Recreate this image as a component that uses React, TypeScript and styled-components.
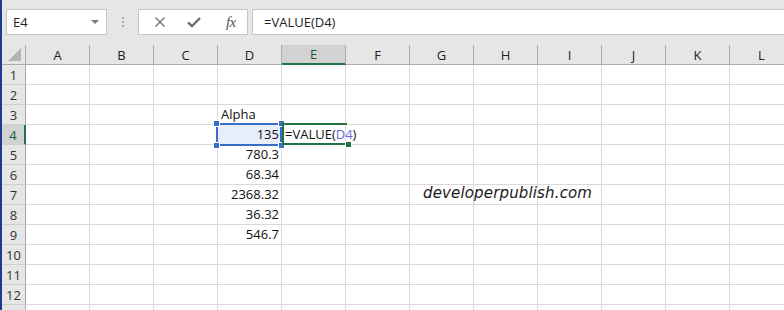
import React from 'react';
import styled, { createGlobalStyle, css } from 'styled-components';

const GlobalStyle = createGlobalStyle`
    html, body {
        margin: 0;
        padding: 0;
        background: #ffffff;
    }
    body {
        font-family: "Open Sans", "Liberation Sans", sans-serif;
    }
`;

const COLUMNS = ['A', 'B', 'C', 'D', 'E', 'F', 'G', 'H', 'I', 'J', 'K', 'L'];
const ROW_COUNT = 12;

const GREEN = '#217346';
const REF_BLUE = '#3a6cc9';

type CellValue = { text: string; align?: 'left' | 'right'; formula?: boolean };

const DATA: Record<string, CellValue> = {
    D3: { text: 'Alpha', align: 'left' },
    D4: { text: '135', align: 'right' },
    D5: { text: '780.3', align: 'right' },
    D6: { text: '68.34', align: 'right' },
    D7: { text: '2368.32', align: 'right' },
    D8: { text: '36.32', align: 'right' },
    D9: { text: '546.7', align: 'right' },
    E4: { text: '=VALUE(D4)', align: 'left', formula: true },
};

const Frame = styled.div`
    position: relative;
    width: 784px;
    height: 310px;
    overflow: hidden;
    box-sizing: border-box;
    border-left: 2px solid #1f3a93;
    background: #e6e6e6;
    display: flex;
    flex-direction: column;
`;

const TopBar = styled.div`
    height: 45px;
    flex: none;
    display: flex;
    align-items: flex-start;
    padding: 9px 0 0 4px;
    box-sizing: border-box;
`;

const NameBox = styled.div`
    width: 101px;
    height: 26px;
    box-sizing: border-box;
    background: #ffffff;
    border: 1px solid #c6c6c6;
    display: flex;
    align-items: center;
    justify-content: space-between;
    padding: 0 6px 0 6px;
    font-size: 13px;
    color: #222;
`;

const DropArrow = styled.span`
    width: 0;
    height: 0;
    border-left: 4px solid transparent;
    border-right: 4px solid transparent;
    border-top: 4px solid #7a7a7a;
    margin-right: 1px;
`;

const Grip = styled.div`
    width: 31px;
    height: 26px;
    display: flex;
    flex-direction: column;
    align-items: center;
    justify-content: center;
    gap: 2px;

    span {
        width: 2px;
        height: 2px;
        background: #a8a8a8;
    }
`;

const ButtonGroup = styled.div`
    width: 110px;
    height: 26px;
    box-sizing: border-box;
    background: #ffffff;
    border: 1px solid #c6c6c6;
    display: flex;
    align-items: center;
    justify-content: space-around;
    padding: 0 1px 0 4px;
`;

const BarButton = styled.span`
    width: 24px;
    display: flex;
    align-items: center;
    justify-content: center;
    color: #6e6e6e;
`;

const FxLabel = styled.span`
    font-family: "Liberation Serif", serif;
    font-style: italic;
    font-size: 15px;
    color: #555;
    letter-spacing: -0.5px;
    margin-left: 4px;
`;

const FormulaInput = styled.div`
    flex: 1;
    height: 26px;
    margin-left: 4px;
    box-sizing: border-box;
    background: #ffffff;
    border: 1px solid #c6c6c6;
    border-right: none;
    display: flex;
    align-items: center;
    padding-left: 11px;
    font-size: 13px;
    color: #222;
`;

const Sheet = styled.div`
    display: grid;
    grid-template-columns: 24px repeat(${COLUMNS.length}, 64px);
    grid-template-rows: 20px repeat(${ROW_COUNT + 1}, 20px);
    background: #ffffff;
`;

const Corner = styled.div`
    background: #e6e6e6;
    border-right: 1px solid #ababab;
    border-bottom: 1px solid #ababab;
    box-sizing: border-box;
    display: flex;
    align-items: flex-end;
    justify-content: flex-end;
    padding: 0 4px 3px 0;
`;

const CornerTriangle = styled.span`
    width: 0;
    height: 0;
    border-left: 13px solid transparent;
    border-bottom: 13px solid #b5b5b5;
`;

const ColHeader = styled.div<{ $active?: boolean }>`
    background: #e6e6e6;
    box-sizing: border-box;
    border-right: 1px solid #ababab;
    border-bottom: 1px solid #ababab;
    display: flex;
    align-items: center;
    justify-content: center;
    font-size: 13px;
    color: #222;
    ${(p) =>
        p.$active &&
        css`
            background: #d2d2d2;
            border-bottom: 2px solid ${GREEN};
            color: #1d5a38;
        `}
`;

const RowHeader = styled.div<{ $active?: boolean }>`
    background: #e6e6e6;
    box-sizing: border-box;
    border-right: 1px solid #ababab;
    border-bottom: 1px solid #d0d0d0;
    display: flex;
    align-items: center;
    justify-content: center;
    font-size: 13px;
    color: #333;
    ${(p) =>
        p.$active &&
        css`
            background: #d2d2d2;
            border-right: 2px solid ${GREEN};
            color: #1d5a38;
        `}
`;

const Cell = styled.div<{ $align?: 'left' | 'right'; $ref?: boolean }>`
    position: relative;
    box-sizing: border-box;
    border-right: 1px solid #d9d9d9;
    border-bottom: 1px solid #d9d9d9;
    display: flex;
    align-items: flex-end;
    justify-content: ${(p) => (p.$align === 'right' ? 'flex-end' : 'flex-start')};
    padding: 0 2px 1px 3px;
    font-size: 13px;
    color: #111;
    white-space: nowrap;
    overflow: visible;
    background: ${(p) => (p.$ref ? '#e8eef9' : 'transparent')};
`;

const CellText = styled.span`
    position: relative;
    z-index: 2;
`;

const RefName = styled.span`
    color: #6a67d4;
`;

const RefBox = styled.div`
    position: absolute;
    top: -2px;
    left: -2px;
    right: -1px;
    bottom: -2px;
    border: 2px solid ${REF_BLUE};
    pointer-events: none;
    z-index: 3;
`;

const Handle = styled.span<{ $x: 'left' | 'right'; $y: 'top' | 'bottom'; $color: string }>`
    position: absolute;
    width: 5px;
    height: 5px;
    background: ${(p) => p.$color};
    border: 1px solid #ffffff;
    ${(p) => (p.$x === 'left' ? 'left: -5px;' : 'right: -5px;')}
    ${(p) => (p.$y === 'top' ? 'top: -5px;' : 'bottom: -5px;')}
`;

const EditBox = styled.div`
    position: absolute;
    top: -2px;
    left: 0;
    right: -2px;
    bottom: -1px;
    border-top: 2px solid ${GREEN};
    border-bottom: 2px solid ${GREEN};
    border-left: 2px solid ${GREEN};
    pointer-events: none;
    z-index: 3;
`;

const Watermark = styled.div`
    position: absolute;
    left: 421px;
    top: 184px;
    font-family: "DejaVu Sans", sans-serif;
    font-style: italic;
    font-size: 15px;
    letter-spacing: 0.15px;
    color: #1a1a1a;
    z-index: 4;
`;

const CloseIcon = () => (
    <svg width="12" height="12" viewBox="0 0 12 12">
        <path d="M1.5 1.5 L10.5 10.5 M10.5 1.5 L1.5 10.5" stroke="#707070" strokeWidth="1.4" fill="none" />
    </svg>
);

const CheckIcon = () => (
    <svg width="14" height="12" viewBox="0 0 14 12">
        <path d="M1 6.5 L5 10 L13 2" stroke="#707070" strokeWidth="2.4" fill="none" strokeLinejoin="miter" />
    </svg>
);

function renderCellContent(value: CellValue) {
    if (value.formula) {
        return (
            <CellText>
                =VALUE(<RefName>D4</RefName>)
            </CellText>
        );
    }
    return <CellText>{value.text}</CellText>;
}

export default function App() {
    const rows = Array.from({ length: ROW_COUNT }, (_, i) => i + 1);

    return (
        <>
            <GlobalStyle />
            <Frame>
                <TopBar>
                    <NameBox>
                        <span>E4</span>
                        <DropArrow />
                    </NameBox>
                    <Grip>
                        <span />
                        <span />
                        <span />
                    </Grip>
                    <ButtonGroup>
                        <BarButton><CloseIcon /></BarButton>
                        <BarButton><CheckIcon /></BarButton>
                        <BarButton><FxLabel>fx</FxLabel></BarButton>
                    </ButtonGroup>
                    <FormulaInput>=VALUE(D4)</FormulaInput>
                </TopBar>

                <Sheet>
                    <Corner><CornerTriangle /></Corner>
                    {COLUMNS.map((c) => (
                        <ColHeader key={c} $active={c === 'E'}>{c}</ColHeader>
                    ))}
                    {rows.map((r) => (
                        <React.Fragment key={r}>
                            <RowHeader $active={r === 4}>{r}</RowHeader>
                            {COLUMNS.map((c) => {
                                const id = `${c}${r}`;
                                const value = DATA[id];
                                const isRef = id === 'D4';
                                const isEdit = id === 'E4';
                                return (
                                    <Cell key={id} $align={value?.align} $ref={isRef}>
                                        {value && renderCellContent(value)}
                                        {isRef && (
                                            <RefBox>
                                                <Handle $x="left" $y="top" $color={REF_BLUE} />
                                                <Handle $x="right" $y="top" $color={REF_BLUE} />
                                                <Handle $x="left" $y="bottom" $color={REF_BLUE} />
                                                <Handle $x="right" $y="bottom" $color={REF_BLUE} />
                                            </RefBox>
                                        )}
                                        {isEdit && (
                                            <EditBox>
                                                <Handle $x="right" $y="bottom" $color={GREEN} />
                                            </EditBox>
                                        )}
                                    </Cell>
                                );
                            })}
                        </React.Fragment>
                    ))}
                    {/* partially visible row below 12, its label falls outside the window */}
                    <RowHeader />
                    {COLUMNS.map((c) => (
                        <Cell key={`${c}-tail`} />
                    ))}
                </Sheet>

                <Watermark>developerpublish.com</Watermark>
            </Frame>
        </>
    );
}
